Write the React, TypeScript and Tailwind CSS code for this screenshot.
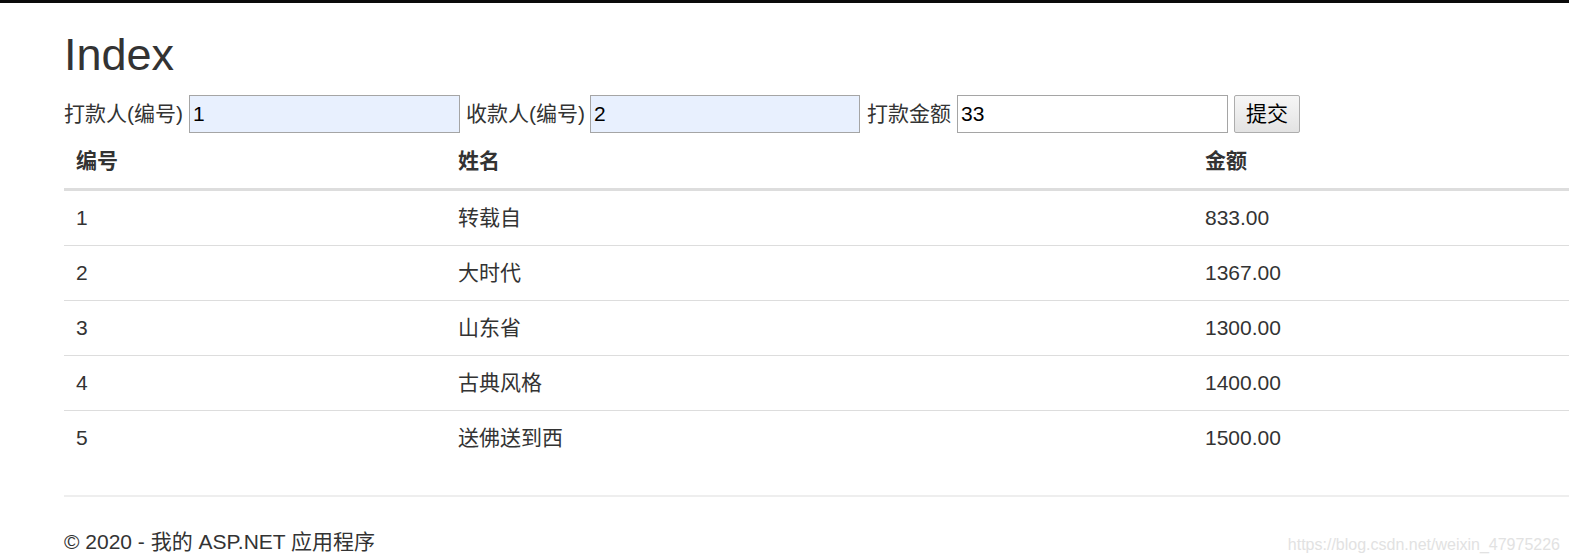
import React from "react";

const rows = [
  { id: "1", name: "转载自", amount: "833.00" },
  { id: "2", name: "大时代", amount: "1367.00" },
  { id: "3", name: "山东省", amount: "1300.00" },
  { id: "4", name: "古典风格", amount: "1400.00" },
  { id: "5", name: "送佛送到西", amount: "1500.00" },
];

export default function App() {
  return (
    <div
      className="relative h-[560px] w-full overflow-hidden bg-white text-[#333]"
      style={{ fontFamily: '"Liberation Sans", Arial, "Noto Sans CJK SC", sans-serif' }}
    >
      <div className="h-[3px] bg-[#0a0a0a]" />
      <div className="pl-[64px]">
        <h2 className="mt-[27px] mb-[15px] text-[45px] leading-[1.1] font-normal">Index</h2>
        <form className="flex h-[38px] items-center text-[21px] leading-[30px]">
          <label className="mr-[6px]">打款人(编号)</label>
          <input
            defaultValue="1"
            className="h-[38px] w-[271px] border border-[#a5a5a5] bg-[#e8f0fe] px-[3px] text-[21px] text-black outline-none"
          />
          <label className="ml-[6px] mr-[5px]">收款人(编号)</label>
          <input
            defaultValue="2"
            className="h-[38px] w-[270px] border border-[#a5a5a5] bg-[#e8f0fe] px-[3px] text-[21px] text-black outline-none"
          />
          <label className="ml-[7px] mr-[6px]">打款金额</label>
          <input
            defaultValue="33"
            className="h-[38px] w-[271px] border border-[#a5a5a5] bg-white px-[3px] text-[21px] text-black outline-none"
          />
          <button
            type="button"
            className="ml-[6px] h-[38px] w-[66px] rounded-[2px] border border-[#adadad] bg-gradient-to-b from-[#f6f6f6] to-[#e3e3e3] text-[21px] text-black"
          >
            提交
          </button>
        </form>
        <table className="mt-[1px] mb-[30px] w-full table-fixed border-collapse text-[21px] leading-[30px]">
          <colgroup>
            <col className="w-[382px]" />
            <col className="w-[747px]" />
            <col />
          </colgroup>
          <thead>
            <tr>
              <th className="border-b-[3px] border-[#ddd] px-[12px] py-[12px] text-left font-bold">编号</th>
              <th className="border-b-[3px] border-[#ddd] px-[12px] py-[12px] text-left font-bold">姓名</th>
              <th className="border-b-[3px] border-[#ddd] px-[12px] py-[12px] text-left font-bold">金额</th>
            </tr>
          </thead>
          <tbody>
            {rows.map((r, i) => (
              <tr key={r.id}>
                <td className={`${i === 0 ? "" : "border-t border-[#ddd]"} px-[12px] py-[12px]`}>{r.id}</td>
                <td className={`${i === 0 ? "" : "border-t border-[#ddd]"} px-[12px] py-[12px]`}>{r.name}</td>
                <td className={`${i === 0 ? "" : "border-t border-[#ddd]"} px-[12px] py-[12px]`}>{r.amount}</td>
              </tr>
            ))}
          </tbody>
        </table>
        <hr className="border-0 border-t-2 border-[#eee]" />
        <footer className="mt-[30px]">
          <p className="text-[21px] leading-[30px]">© 2020 - 我的 ASP.NET 应用程序</p>
        </footer>
      </div>
      <div className="absolute bottom-[5px] right-[9px] text-[16px] leading-[20px] text-[#e2e2e2]">
        https://blog.csdn.net/weixin_47975226
      </div>
    </div>
  );
}
